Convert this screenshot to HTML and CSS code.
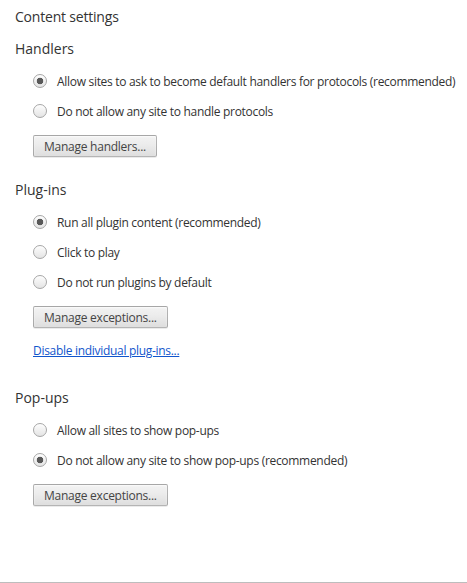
FILE: index.html
```html
<!doctype html>
<html lang="en">
  <head>
    <meta charset="UTF-8" />
    <meta name="viewport" content="width=device-width, initial-scale=1.0" />
    <title>Content settings</title>
    <link rel="stylesheet" href="styles.css">
  </head>
  <body>
    <div class="page">
      <h1>Content settings</h1>

      <section class="group">
        <h2>Handlers</h2>
        <label class="option">
          <input type="radio" name="handlers" checked />
          <span>Allow sites to ask to become default handlers for protocols (recommended)</span>
        </label>
        <label class="option">
          <input type="radio" name="handlers" />
          <span>Do not allow any site to handle protocols</span>
        </label>
        <div class="actions">
          <button>Manage handlers...</button>
        </div>
      </section>

      <section class="group">
        <h2>Plug-ins</h2>
        <label class="option">
          <input type="radio" name="plugins" checked />
          <span>Run all plugin content (recommended)</span>
        </label>
        <label class="option">
          <input type="radio" name="plugins" />
          <span>Click to play</span>
        </label>
        <label class="option">
          <input type="radio" name="plugins" />
          <span>Do not run plugins by default</span>
        </label>
        <div class="actions">
          <button>Manage exceptions...</button>
        </div>
        <div class="link-row">
          <a href="#">Disable individual plug-ins...</a>
        </div>
      </section>

      <section class="group">
        <h2>Pop-ups</h2>
        <label class="option">
          <input type="radio" name="popups" />
          <span>Allow all sites to show pop-ups</span>
        </label>
        <label class="option">
          <input type="radio" name="popups" checked />
          <span>Do not allow any site to show pop-ups (recommended)</span>
        </label>
        <div class="actions">
          <button>Manage exceptions...</button>
        </div>
      </section>
    </div>
  </body>
</html>
```

FILE: styles.css
```css
body {
  margin: 0;
  background: white;
  color: #333;
  font-family: "Open Sans", "Noto Sans", sans-serif;
  font-size: 12px;
  letter-spacing: -0.3px;
}

.page {
  box-sizing: border-box;
  height: 583px;
  padding: 7px 15px 0;
  border-bottom: 1px solid #bdbdbd;
}

h1 {
  margin: 0;
  font-size: 14px;
  font-weight: normal;
  line-height: 20px;
  letter-spacing: -0.2px;
}

.group h2 {
  margin: 0 0 7px;
  font-size: 14px;
  font-weight: normal;
  line-height: 20px;
  letter-spacing: 0;
}

.group {
  margin-top: 12px;
}

.group + .group {
  margin-top: 23px;
}

.option {
  display: flex;
  align-items: center;
  gap: 10px;
  height: 30px;
  padding-left: 18px;
  white-space: nowrap;
}

.option input {
  appearance: none;
  flex-shrink: 0;
  margin: 0;
  width: 14px;
  height: 14px;
  border: 1px solid #a6a6a6;
  border-radius: 50%;
  background: linear-gradient(#fdfdfd, #e4e4e4);
  box-shadow: inset 0 1px 1px rgba(255, 255, 255, 0.8);
}

.option input:checked {
  background:
    radial-gradient(circle, #595959 0 3px, rgba(89, 89, 89, 0) 3.6px),
    linear-gradient(#fdfdfd, #e4e4e4);
}

.actions {
  padding: 9px 0 0 18px;
}

button {
  height: 22px;
  padding: 0 10px;
  font-family: inherit;
  font-size: 12px;
  letter-spacing: -0.25px;
  color: #444;
  border: 1px solid rgba(0, 0, 0, 0.25);
  border-radius: 2px;
  background: linear-gradient(#f2f2f2, #ededed 38%, #dedede);
  box-shadow: 0 1px 0 rgba(0, 0, 0, 0.08), inset 0 1px 2px rgba(255, 255, 255, 0.75);
}

.link-row {
  padding: 13px 0 4px 18px;
  line-height: 20px;
}

.link-row a {
  color: #15c;
}
```
